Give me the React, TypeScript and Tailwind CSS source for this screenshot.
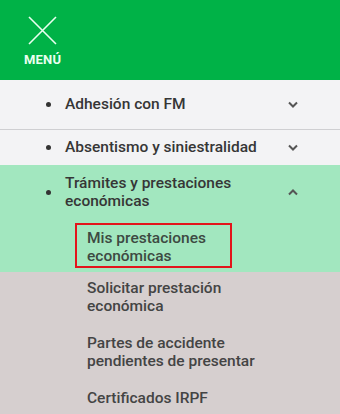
import React from 'react';

const font = { fontFamily: 'Roboto, "Liberation Sans", sans-serif' };

function Chevron({ up }: { up?: boolean }) {
  return (
    <svg width="12" height="8" viewBox="0 0 12 8" className="text-[#555]">
      <path
        d={up ? 'M2 6.5 L6 2.5 L10 6.5' : 'M2 1.5 L6 5.5 L10 1.5'}
        fill="none"
        stroke="currentColor"
        strokeWidth="2"
      />
    </svg>
  );
}

function Bullet() {
  return <span className="w-[5px] h-[5px] rounded-full bg-[#333] flex-shrink-0" />;
}

const subItems = [
  ['Solicitar prestación', 'económica'],
  ['Partes de accidente', 'pendientes de presentar'],
  ['Certificados IRPF'],
];

export default function App() {
  return (
    <div className="w-[340px] h-[414px] overflow-hidden bg-white" style={font}>
      <div className="h-[80px] bg-[#00b247] flex flex-col pl-[24px] pt-[16px]">
        <svg width="29" height="29" viewBox="0 0 29 29" className="ml-[4px]">
          <path d="M1 1 L28 28 M28 1 L1 28" stroke="#eafff0" strokeWidth="1.6" fill="none" />
        </svg>
        <span className="mt-[7px] text-[13px] leading-[15px] font-bold text-[#eafff0] tracking-[0.2px]">
          MENÚ
        </span>
      </div>

      <div className="h-[50px] bg-[#f3f3f5] border-b border-[#cfcfd2] flex items-center pl-[46px] pr-[41px]">
        <Bullet />
        <span className="ml-[14px] flex-1 text-[15.5px] font-medium text-[#363636]">Adhesión con FM</span>
        <Chevron />
      </div>

      <div className="h-[35px] bg-[#f3f3f5] flex items-center pl-[46px] pr-[41px]">
        <Bullet />
        <span className="ml-[14px] flex-1 text-[15.5px] font-medium text-[#363636]">Absentismo y siniestralidad</span>
        <Chevron />
      </div>

      <div className="bg-[#a2e7bf] pt-[9px] pb-[4px]">
        <div className="flex items-center pl-[46px] pr-[41px]">
          <Bullet />
          <span className="ml-[14px] flex-1 text-[15.5px] leading-[18px] font-medium text-[#363636]">
            Trámites y prestaciones
            <br />
            económicas
          </span>
          <Chevron up />
        </div>
        <div className="mt-[13px] ml-[75px] w-[157px] border-2 border-[#e3141b] pl-[10px] pt-[4px] pb-[1px]">
          <span className="block text-[15.5px] leading-[18px] font-medium text-[#3d4a42]">
            Mis prestaciones
            <br />
            económicas
          </span>
        </div>
      </div>

      <div className="bg-[#d6cfcf] h-full pt-[7px] pl-[87px] flex flex-col gap-[19px]">
        {subItems.map((lines, i) => (
          <span key={i} className="text-[15.5px] leading-[18px] font-medium text-[#444]">
            {lines.map((l, j) => (
              <React.Fragment key={j}>
                {j > 0 && <br />}
                {l}
              </React.Fragment>
            ))}
          </span>
        ))}
      </div>
    </div>
  );
}
